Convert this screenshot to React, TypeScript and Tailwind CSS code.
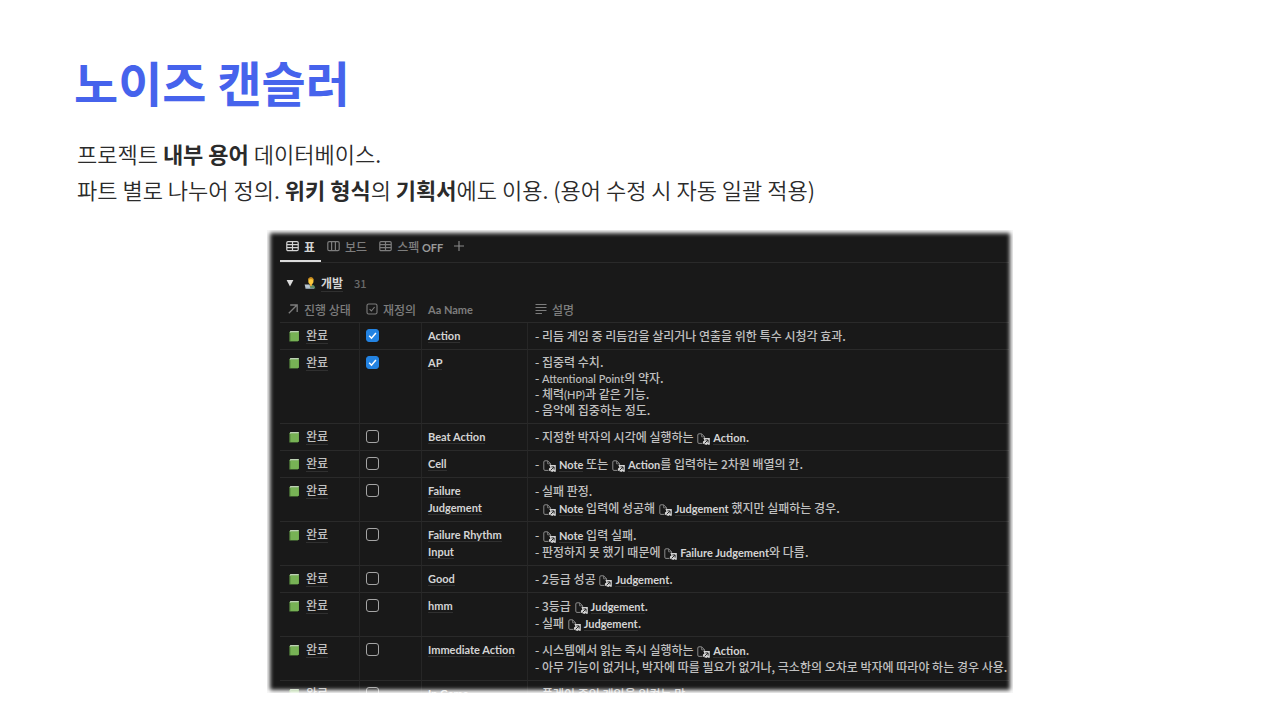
import type { ReactNode } from "react";

type IconProps = { className?: string };

function TableIcon({ className }: IconProps) {
  return (
    <svg className={className} width="13" height="12" viewBox="0 0 13 12" fill="none" stroke="currentColor" strokeWidth="1.2" aria-hidden="true">
      <rect x="0.8" y="1.6" width="11.4" height="9" rx="1.2" />
      <path d="M0.8 4.7H12.2M0.8 7.6H12.2M6.5 1.6V10.6" />
    </svg>
  );
}

function BoardIcon({ className }: IconProps) {
  return (
    <svg className={className} width="13" height="12" viewBox="0 0 13 12" fill="none" stroke="currentColor" strokeWidth="1.2" aria-hidden="true">
      <rect x="0.8" y="1.6" width="11.4" height="9" rx="1.4" />
      <path d="M4.6 1.6V10.6M8.4 1.6V10.6" />
    </svg>
  );
}

function PersonIcon() {
  return (
    <svg width="12" height="12" viewBox="0 0 12 12" aria-hidden="true">
      <path d="M3.4 11.4C3.4 8.6 4.6 7.4 7 7.4S11.2 8.8 11.2 11.4Z" fill="#5b8a63" />
      <path d="M5.8 6H8V8.6L6.9 9.4L5.8 8.6Z" fill="#e8a93a" />
      <ellipse cx="6.9" cy="3.9" rx="2.6" ry="3.3" fill="#fcc93c" />
      <path d="M4.2 3.6C4 1.4 5.2 0.3 7 0.3S9.8 1.6 9.6 3.8C9 2.6 8.2 2.2 7 2.2S4.7 2.6 4.2 3.6Z" fill="#c98a1c" />
      <path d="M0.6 7.6H5.4L6.4 11.4H1.6Z" fill="#b9c7d3" />
      <rect x="1.6" y="10.8" width="8.4" height="0.9" fill="#8fa1b0" />
    </svg>
  );
}

function BookIcon() {
  return (
    <svg width="12" height="12" viewBox="0 0 12 12" aria-hidden="true">
      <path d="M1.4 2.2L2.4 1H11V9.6L9.8 11.4H1.4Z" fill="#5c9142" />
      <path d="M2.3 1.2H10.8L10.4 2.6H1.8Z" fill="#dfe9dc" />
      <rect x="2.6" y="2.6" width="8.2" height="8.4" rx="0.6" fill="#77b255" />
    </svg>
  );
}

function PageLinkIcon() {
  return (
    <svg className="mr-[3px] ml-px inline-block align-[-3px]" width="13" height="12" viewBox="0 0 13 12" fill="none" aria-hidden="true">
      <path d="M5.4 10.4H2A1.2 1.2 0 0 1 0.8 9.2V2A1.2 1.2 0 0 1 2 0.8H4.6L7.6 3.8V5.4" stroke="#8b8b8b" strokeWidth="1" />
      <path d="M4.6 0.8V3.8H7.6" stroke="#8b8b8b" strokeWidth="0.8" />
      <path d="M6.4 5H12.8V11.8H10.9L10.6 11L9.4 12L5.8 10.4L6 8.6L7.4 7.6Z" fill="#d4d4d4" />
      <path d="M7.6 10.4L10.8 7.2M8.4 6.9H11.1V9.6" stroke="#191919" strokeWidth="0.9" />
    </svg>
  );
}

function Ref({ children }: { children: string }) {
  return (
    <a href="#term" className="font-['Lato','Noto_Sans_CJK_KR',sans-serif] text-[11px] leading-3 font-bold whitespace-nowrap text-[#d4d4d4]">
      <PageLinkIcon />
      <span className="border-b border-[#303030]">{children}</span>
    </a>
  );
}

function Latin({ children }: { children: string }) {
  return <span className="font-['Lato','Noto_Sans_CJK_KR',sans-serif] text-[11px] leading-3">{children}</span>;
}

type Term = { name: string; checked?: boolean; dense?: boolean; lines: ReactNode[] };

const terms: Term[] = [
  { name: "Action", checked: true, lines: ["- 리듬 게임 중 리듬감을 살리거나 연출을 위한 특수 시청각 효과."] },
  {
    name: "AP",
    checked: true,
    dense: true,
    lines: ["- 집중력 수치.", <>- <Latin>Attentional Point</Latin>의 약자.</>, <>- 체력<Latin>(HP)</Latin>과 같은 기능.</>, "- 음악에 집중하는 정도."],
  },
  { name: "Beat Action", lines: [<>- 지정한 박자의 시각에 실행하는 <Ref>Action</Ref>.</>] },
  { name: "Cell", lines: [<>- <Ref>Note</Ref> 또는 <Ref>Action</Ref>를 입력하는 2차원 배열의 칸.</>] },
  {
    name: "Failure\nJudgement",
    lines: ["- 실패 판정.", <>- <Ref>Note</Ref> 입력에 성공해 <Ref>Judgement</Ref> 했지만 실패하는 경우.</>],
  },
  {
    name: "Failure Rhythm\nInput",
    lines: [<>- <Ref>Note</Ref> 입력 실패.</>, <>- 판정하지 못 했기 때문에 <Ref>Failure Judgement</Ref>와 다름.</>],
  },
  { name: "Good", lines: [<>- 2등급 성공 <Ref>Judgement</Ref>.</>] },
  { name: "hmm", lines: [<>- 3등급 <Ref>Judgement</Ref>.</>, <>- 실패 <Ref>Judgement</Ref>.</>] },
  {
    name: "Immediate Action",
    lines: [
      <>- 시스템에서 읽는 즉시 실행하는 <Ref>Action</Ref>.</>,
      "- 아무 기능이 없거나, 박자에 따를 필요가 없거나, 극소한의 오차로 박자에 따라야 하는 경우 사용.",
    ],
  },
  { name: "In Game", lines: ["- 플레이 중인 게임을 일컫는 말."] },
];

const cell = "border-b border-[#2a2a2a] pr-1 pt-1 pb-[5px] align-top";
const divided = "border-r border-r-[#262626]";

function Row({ term }: { term: Term }) {
  return (
    <tr>
      <td className={`${cell} ${divided} pl-2`}>
        <span className="flex h-[17px] items-center gap-[6px]">
          <BookIcon />
          <a href="#status" className="border-b border-[#303030] leading-4">완료</a>
        </span>
      </td>
      <td className={`${cell} ${divided} pl-[6px]`}>
        <label className="relative flex h-[17px] w-[13px] items-center">
          <input
            type="checkbox"
            defaultChecked={term.checked}
            aria-label={`${term.name} 재정의`}
            className="peer size-[13px] appearance-none rounded-[3px] border border-[#a5a5a5] checked:border-[#2383e2] checked:bg-[#2383e2]"
          />
          <svg className="pointer-events-none absolute left-0 hidden peer-checked:block" width="13" height="13" viewBox="0 0 13 13" fill="none" stroke="#fff" strokeWidth="1.5" aria-hidden="true">
            <path d="M3.2 6.8L5.5 9.2L9.9 3.9" />
          </svg>
        </label>
      </td>
      <td className={`${cell} ${divided} pl-[6px] font-['Lato','Noto_Sans_CJK_KR',sans-serif] text-[11px] font-bold text-[#d4d4d4]`}>
        <span className="border-b border-[#303030] whitespace-pre-line">{term.name}</span>
      </td>
      <td className={`${cell} pl-[7px] ${term.dense ? "leading-4" : ""}`}>
        {term.lines.map((line, i) => (
          <div key={i} className="whitespace-nowrap">{line}</div>
        ))}
      </td>
    </tr>
  );
}

const tab = "flex h-8 items-center gap-[5px] px-[6px]";
const head = "h-[27px] border-b border-[#2a2a2a] text-left font-medium";

export default function App() {
  return (
    <main className="min-h-screen bg-white font-['Noto_Sans_CJK_KR',sans-serif]">
      <header className="px-[74px] pt-[46px]">
        <h1 className="text-5xl leading-[70px] font-bold text-[#4663ec]">노이즈 캔슬러</h1>
        <div className="mt-[19px] pl-[3px] text-[22px] leading-9 font-[350] text-[#2b2b2b]">
          <p>프로젝트 <b className="font-bold">내부 용어</b> 데이터베이스.</p>
          <p>
            파트 별로 나누어 정의. <b className="font-bold">위키 형식</b>의 <b className="font-bold">기획서</b>에도 이용. (용어 수정 시 자동 일괄 적용)
          </p>
        </div>
      </header>

      <section className="relative mx-auto mt-[23px] h-[463px] w-[746px] max-w-full overflow-hidden bg-[#191919] pr-1 pl-[13px] text-xs leading-[17px] font-medium text-[#c0c0c0]">
        <nav className="flex border-b border-[#2a2a2a] text-[#7d7d7d]">
          <button type="button" className={`${tab} font-bold text-[#d4d4d4] shadow-[inset_0_-2px_0_#dcdcdc]`}><TableIcon />표</button>
          <button type="button" className={tab}><BoardIcon />보드</button>
          <button type="button" className={tab}><TableIcon /><span>스펙 <b className="font-['Lato',sans-serif] text-[11px] leading-3 font-bold text-[#9a9a9a]">OFF</b></span></button>
          <button type="button" aria-label="보기 추가" className="flex h-8 items-center px-1 text-[#8a8a8a]">
            <svg width="12" height="12" viewBox="0 0 12 12" stroke="currentColor" strokeWidth="1.1" aria-hidden="true"><path d="M6 1V11M1 6H11" /></svg>
          </button>
        </nav>

        <div className="flex h-[33px] items-center pt-[7px] pl-[6px]">
          <svg width="8" height="8" viewBox="0 0 8 8" fill="#dcdcdc" aria-hidden="true"><path d="M0.6 1H7.4L4 7.4Z" /></svg>
          <span className="ml-[10px]"><PersonIcon /></span>
          <h2 className="ml-[5px] border-b border-[#303030] font-bold text-[#d4d4d4]">개발</h2>
          <span className="ml-[11px] text-[11px] text-[#6a6a6a]">31</span>
        </div>

        <table className="w-full table-fixed border-separate border-spacing-0">
          <colgroup>
            <col className="w-20" />
            <col className="w-[62px]" />
            <col className="w-[106px]" />
            <col />
          </colgroup>
          <thead className="text-[#7d7d7d]">
            <tr>
              <th className={`${head} pl-[7px]`}>
                <span className="flex items-center gap-[5px] whitespace-nowrap">
                  <svg width="12" height="12" viewBox="0 0 12 12" fill="none" stroke="currentColor" strokeWidth="1.3" aria-hidden="true"><path d="M1.8 10.2L10 2M3.2 2H10.2V9" /></svg>
                  진행 상태
                </span>
              </th>
              <th className={`${head} pl-[6px]`}>
                <span className="flex items-center gap-[5px] whitespace-nowrap">
                  <svg width="12" height="12" viewBox="0 0 12 12" fill="none" stroke="currentColor" strokeWidth="1.1" aria-hidden="true"><rect x="1" y="1" width="10" height="10" rx="1.6" /><path d="M3.6 6.2L5.4 8L8.6 4" /></svg>
                  재정의
                </span>
              </th>
              <th className={`${head} pl-[6px]`}>
                <span className="font-['Lato',sans-serif] text-[11px] font-bold">Aa Name</span>
              </th>
              <th className={`${head} pl-[7px]`}>
                <span className="flex items-center gap-[5px]">
                  <svg width="12" height="12" viewBox="0 0 12 12" fill="none" stroke="currentColor" strokeWidth="1.1" aria-hidden="true"><path d="M0.5 1.5H11.5M0.5 4.5H11.5M0.5 7.5H11.5M0.5 10.5H7" /></svg>
                  설명
                </span>
              </th>
            </tr>
          </thead>
          <tbody>
            {terms.map((term) => (
              <Row key={term.name} term={term} />
            ))}
          </tbody>
        </table>

        <div className="pointer-events-none absolute inset-0 shadow-[inset_0_0_4px_3px_#fff]" />
      </section>
    </main>
  );
}
